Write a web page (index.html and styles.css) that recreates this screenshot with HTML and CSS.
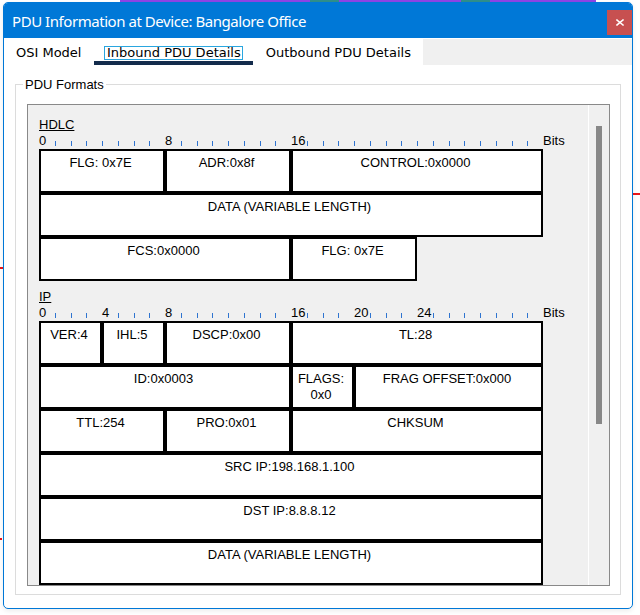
FILE: index.html
```html
<!DOCTYPE html>
<html>
<head>
<meta charset="utf-8">
<link rel="stylesheet" href="styles.css">
</head>
<body>
<div class="bg-strip"><span class="seg-p1"></span><span class="seg-t"></span><span class="seg-p2"></span><span class="seg-t"></span><span class="seg-p3"></span></div>
<div class="bg-mark bg-mark-r"></div>
<div class="bg-mark bg-mark-l1"></div>
<div class="bg-mark bg-mark-l2"></div>

<div class="window">
  <div class="titlebar">
    <span class="title">PDU Information at Device: Bangalore Office</span>
    <button class="close" type="button"><svg width="8" height="7" viewBox="0 0 8 7"><path d="M1 1L7 6M7 1L1 6" stroke="#fff" stroke-width="1.6" stroke-linecap="square"/></svg></button>
  </div>
  <div class="tabs">
    <div class="tab">OSI Model</div>
    <div class="tab tab-active"><span class="focus">Inbound PDU Details</span></div>
    <div class="tab">Outbound PDU Details</div>
  </div>
  <fieldset class="group">
    <legend>PDU Formats</legend>
    <div class="panel">
      <div class="panel-content">
        <section class="proto">
          <div class="proto-name">HDLC</div>
          <div class="ruler">
            <span class="rl">0</span><span class="tk"></span><span class="tk"></span><span class="tk"></span><span class="tk"></span><span class="tk"></span><span class="tk"></span><span class="tk"></span>
            <span class="rl">8</span><span class="tk"></span><span class="tk"></span><span class="tk"></span><span class="tk"></span><span class="tk"></span><span class="tk"></span><span class="tk"></span>
            <span class="rl">16</span><span class="tk"></span><span class="tk"></span><span class="tk"></span><span class="tk"></span><span class="tk"></span><span class="tk"></span><span class="tk"></span>
            <span class="tk"></span><span class="tk"></span><span class="tk"></span><span class="tk"></span><span class="tk"></span><span class="tk"></span><span class="tk"></span><span class="tk"></span>
            <span class="rl">Bits</span>
          </div>
          <div class="fields">
            <div class="f s8">FLG: 0x7E</div>
            <div class="f s8">ADR:0x8f</div>
            <div class="f s16">CONTROL:0x0000</div>
            <div class="f s32">DATA (VARIABLE LENGTH)</div>
            <div class="f s16">FCS:0x0000</div>
            <div class="f s8">FLG: 0x7E</div>
          </div>
        </section>
        <section class="proto">
          <div class="proto-name">IP</div>
          <div class="ruler">
            <span class="rl">0</span><span class="tk"></span><span class="tk"></span><span class="tk"></span>
            <span class="rl">4</span><span class="tk"></span><span class="tk"></span><span class="tk"></span>
            <span class="rl">8</span><span class="tk"></span><span class="tk"></span><span class="tk"></span><span class="tk"></span><span class="tk"></span><span class="tk"></span><span class="tk"></span>
            <span class="rl">16</span><span class="tk"></span><span class="tk"></span><span class="tk"></span>
            <span class="rl">20</span><span class="tk"></span><span class="tk"></span><span class="tk"></span>
            <span class="rl">24</span><span class="tk"></span><span class="tk"></span><span class="tk"></span><span class="tk"></span><span class="tk"></span><span class="tk"></span><span class="tk"></span>
            <span class="rl">Bits</span>
          </div>
          <div class="fields">
            <div class="f s4">VER:4</div>
            <div class="f s4">IHL:5</div>
            <div class="f s8">DSCP:0x00</div>
            <div class="f s16">TL:28</div>
            <div class="f s16">ID:0x0003</div>
            <div class="f s4">FLAGS:<br>0x0</div>
            <div class="f s12">FRAG OFFSET:0x000</div>
            <div class="f s8">TTL:254</div>
            <div class="f s8">PRO:0x01</div>
            <div class="f s16">CHKSUM</div>
            <div class="f s32">SRC IP:198.168.1.100</div>
            <div class="f s32">DST IP:8.8.8.12</div>
            <div class="f s32">DATA (VARIABLE LENGTH)</div>
          </div>
        </section>
      </div>
      <div class="scrollbar"><div class="thumb"></div></div>
    </div>
  </fieldset>
</div>
</body>
</html>
```
FILE: styles.css
```css
html, body {
  margin: 0;
  padding: 0;
}
body {
  position: relative;
  width: 640px;
  height: 615px;
  overflow: hidden;
  background: #ffffff;
  font-family: "Liberation Sans", Arial, sans-serif;
  color: #000;
}

/* background app bits peeking out behind the dialog */
.bg-strip {
  position: absolute;
  top: 0;
  left: 120px;
  width: 476px;
  height: 2px;
  display: flex;
}
.bg-strip span { height: 2px; }
.seg-p1 { width: 190px; background: #8e44e6; }
.seg-t { width: 29px; background: #2f8f8c; }
.seg-p2 { width: 122px; background: #8e44e6; }
.seg-p3 { width: 106px; background: #8e44e6; }
.bg-mark {
  position: absolute;
  height: 2px;
  background: #e8171a;
}
.bg-mark-r { left: 633px; top: 193px; width: 7px; }
.bg-mark-l1 { left: 0; top: 267px; width: 3px; }
.bg-mark-l2 { left: 0; top: 538px; width: 2px; }

/* window */
.window {
  position: relative;
  box-sizing: border-box;
  width: 630px;
  margin: 2px 0 0 3px;
  border: 1px solid #0078d7;
  border-radius: 5px;
  background: #fff;
  overflow: hidden;
  box-shadow: 0 2px 5px rgba(0, 0, 0, 0.08);
}
.titlebar {
  display: flex;
  align-items: center;
  height: 35px;
  padding-left: 8px;
  background: #0078d7;
}
.title {
  font-family: "Noto Sans", "Open Sans", sans-serif;
  font-size: 15px;
  color: #fff;
  letter-spacing: -0.45px;
}
.close {
  margin-left: auto;
  align-self: flex-start;
  margin-top: 7px;
  width: 25px;
  height: 25px;
  padding: 0;
  border: none;
  background: #c75050;
  display: flex;
  align-items: center;
  justify-content: center;
}
.close svg { display: block; }

/* tabs */
.tabs {
  display: flex;
  height: 26px;
  margin-top: 1px;
  background: #f0f0f0;
}
.tab {
  background: #fff;
  padding: 6px 12.5px 1px;
  line-height: 15px;
  border-bottom: 4px solid transparent;
  font-family: "DejaVu Sans", Verdana, sans-serif;
  font-size: 13px;
  white-space: nowrap;
}
.tab:first-child { padding-left: 12px; padding-right: 13px; }
.tab-active {
  border-bottom-color: #132b4c;
  padding-left: 9.5px;
  padding-right: 10.5px;
}
.focus {
  display: inline-block;
  line-height: 12px;
  padding: 0 1px 0 2px;
  border: 1px solid #2aa6df;
}

/* group box */
.group {
  margin: 11px 11px 13px;
  padding: 12px 10px 8px 7px;
  border: 1px solid #dcdcdc;
  min-width: 0;
}
.group legend {
  padding: 1px 2px 0;
  font-size: 13px;
  line-height: 15px;
}

.panel {
  display: flex;
  height: 482px;
  box-sizing: border-box;
  margin-left: 4px;
  border: 1px solid #898989;
  background: #f0f0f0;
}
.panel-content {
  flex: 1;
  overflow: hidden;
  padding: 11px 0 0 11px;
}
.scrollbar {
  width: 20px;
  border-left: 1px solid #fff;
}
.thumb {
  width: 6px;
  height: 298px;
  margin: 21px 0 0 7px;
  background: #888;
}

/* protocol diagrams */
.proto + .proto { margin-top: 7px; }
.proto-name {
  font-size: 13px;
  line-height: 17px;
  text-decoration: underline;
}
.ruler {
  display: grid;
  grid-template-columns: repeat(32, 15.75px) auto;
  height: 16px;
  font-size: 13px;
  line-height: 16px;
}
.rl { white-space: nowrap; }
.tk {
  align-self: start;
  width: 0;
  height: 5px;
  margin-top: 8px;
  border-left: 1px solid #2f74d0;
}
.fields {
  display: grid;
  grid-template-columns: repeat(32, 15.75px);
  grid-auto-rows: 44px;
}
.f {
  box-sizing: border-box;
  border: 2px solid #000;
  background: #fff;
  padding: 4px 3px 0 0;
  text-align: center;
  font-size: 13px;
  line-height: 16px;
  white-space: nowrap;
}
.s4 { grid-column: span 4; }
.s8 { grid-column: span 8; }
.s12 { grid-column: span 12; }
.s16 { grid-column: span 16; }
.s32 { grid-column: span 32; }
```
